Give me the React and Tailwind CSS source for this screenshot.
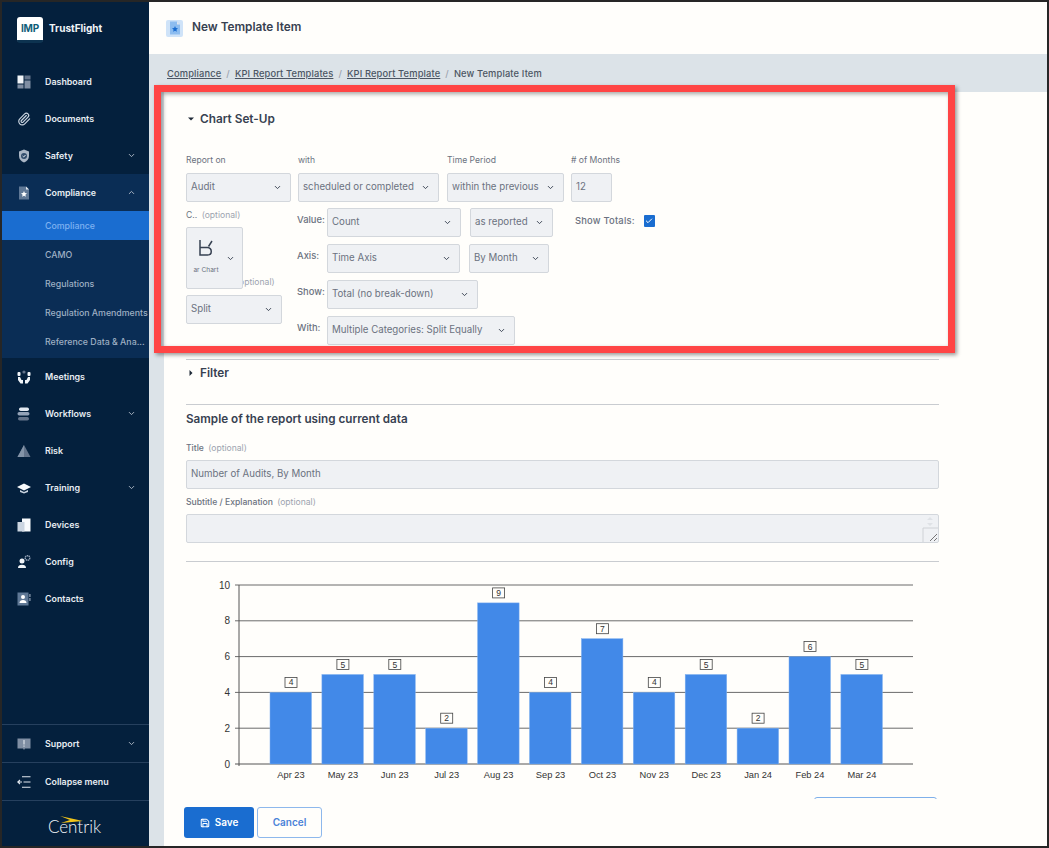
import React from "react";
import { ChevronDown, ChevronUp, Paperclip, Save, Check } from "lucide-react";

const chartData = [
  { label: "Apr 23", value: 4 },
  { label: "May 23", value: 5 },
  { label: "Jun 23", value: 5 },
  { label: "Jul 23", value: 2 },
  { label: "Aug 23", value: 9 },
  { label: "Sep 23", value: 4 },
  { label: "Oct 23", value: 7 },
  { label: "Nov 23", value: 4 },
  { label: "Dec 23", value: 5 },
  { label: "Jan 24", value: 2 },
  { label: "Feb 24", value: 6 },
  { label: "Mar 24", value: 5 },
];

const DashboardIcon = () => (
  <svg width="14" height="14" viewBox="0 0 14 14">
    <rect x="0.5" y="0.5" width="6" height="8" fill="#f1f5f9" />
    <rect x="7.5" y="0.5" width="6" height="4" fill="#64748b" />
    <rect x="7.5" y="5.5" width="6" height="8" fill="#7f8ea3" />
    <rect x="0.5" y="9.5" width="6" height="4" fill="#7f8ea3" />
  </svg>
);

const ShieldIcon = () => (
  <svg width="14" height="14" viewBox="0 0 14 14">
    <path d="M7 0.5 12 2.5V7c0 3-2.2 5.4-5 6.5C4.2 12.4 2 10 2 7V2.5Z" fill="#aab6c5" />
    <circle cx="7" cy="7" r="3" fill="#334e6d" />
    <path d="M5.6 7 6.7 8 8.5 6" stroke="#e2e8f0" strokeWidth="1" fill="none" />
  </svg>
);

const DocStarIcon = ({ bg = "#5f7896", star = "#ffffff" }) => (
  <svg width="14" height="14" viewBox="0 0 14 14">
    <path d="M2 0.5H9L12 3.5V13.5H2Z" fill={bg} />
    <path d="M9 0.5 12 3.5H9Z" fill="#e2e8f0" />
    <path d="M7 5 7.9 7.1 10 7.3 8.4 8.7 8.9 10.8 7 9.7 5.1 10.8 5.6 8.7 4 7.3 6.1 7.1Z" fill={star} />
  </svg>
);

const MeetingsIcon = () => (
  <svg width="14" height="14" viewBox="0 0 14 14">
    <circle cx="7" cy="2" r="1.6" fill="#64748b" />
    <rect x="0.5" y="2" width="3" height="4" rx="1" fill="#f1f5f9" />
    <rect x="10.5" y="2" width="3" height="4" rx="1" fill="#f1f5f9" />
    <path d="M1 7h2l1.5 3H6v3.5H3.5L1 10Z" fill="#f1f5f9" />
    <path d="M13 7h-2L9.5 10H8v3.5h2.5L13 10Z" fill="#f1f5f9" />
  </svg>
);

const WorkflowsIcon = () => (
  <svg width="14" height="14" viewBox="0 0 14 14">
    <rect x="2" y="0.5" width="10" height="3.5" rx="1.7" fill="#e2e8f0" />
    <rect x="0.5" y="5" width="12" height="3.5" rx="1.7" fill="#94a3b8" />
    <rect x="1" y="10" width="11" height="3.5" rx="1.7" fill="#64748b" />
  </svg>
);

const RiskIcon = () => (
  <svg width="14" height="14" viewBox="0 0 14 14">
    <path d="M7 1 13.5 13H0.5Z" fill="#64748b" />
    <path d="M7 1V13H0.5Z" fill="#8494a8" />
  </svg>
);

const TrainingIcon = () => (
  <svg width="14" height="14" viewBox="0 0 14 14">
    <path d="M7 2.5 14 6 7 9.5 0 6Z" fill="#f8fafc" />
    <path d="M3 9 7 11 11 9V11L7 12.5 3 11Z" fill="#cbd5e1" />
  </svg>
);

const DevicesIcon = () => (
  <svg width="14" height="14" viewBox="0 0 14 14">
    <rect x="5" y="0.5" width="8.5" height="13" fill="#f8fafc" />
    <rect x="0.5" y="4" width="7" height="9.5" fill="#cbd5e1" />
  </svg>
);

const ConfigIcon = () => (
  <svg width="14" height="14" viewBox="0 0 14 14">
    <circle cx="5" cy="6" r="2.5" fill="#f1f5f9" />
    <path d="M1 13c0-2.2 1.5-3.3 4-3.3S9 10.8 9 13Z" fill="#f1f5f9" />
    <circle cx="10.5" cy="3" r="2.3" fill="none" stroke="#94a3b8" strokeWidth="1.4" strokeDasharray="1.3 0.5" />
  </svg>
);

const ContactsIcon = () => (
  <svg width="14" height="14" viewBox="0 0 14 14">
    <rect x="0.5" y="0.5" width="11" height="13" fill="#5f7896" />
    <rect x="12.3" y="2" width="1.2" height="3" fill="#94a3b8" />
    <rect x="12.3" y="6" width="1.2" height="3" fill="#94a3b8" />
    <circle cx="6" cy="5" r="2" fill="#ffffff" />
    <path d="M2.5 11c0-2 1.5-3 3.5-3s3.5 1 3.5 3Z" fill="#ffffff" />
  </svg>
);

const SupportIcon = () => (
  <svg width="14" height="14" viewBox="0 0 14 14">
    <path d="M0.5 1.5H13.5V11.500H8L7 13 6 11.500H0.5Z" fill="#7f8ea3" />
    <rect x="6.4" y="3" width="1.2" height="4.5" fill="#dbe2ea" />
    <rect x="6.4" y="8.5" width="1.2" height="1.2" fill="#dbe2ea" />
  </svg>
);

const CollapseIcon = () => (
  <svg width="14" height="14" viewBox="0 0 14 14" fill="none" stroke="#e2e8f0" strokeWidth="1.1">
    <path d="M5 1.8H13.5M6.5 7H13.5M5 12.2H13.5" />
    <path d="M0.8 7H5M3 5 0.8 7 3 9" />
  </svg>
);

const NavItem = ({ icon, label, chevron, open }) => (
  <div className="flex items-center h-[37px] pl-[15px] pr-[13px]">
    <span className="w-[28px] flex items-center">{icon}</span>
    <span className="text-[8.9px] font-semibold text-[#e8edf3] flex-1 whitespace-nowrap pt-[1px]">{label}</span>
    {chevron && (open
      ? <ChevronUp size={9} strokeWidth={2.5} className="text-[#aeb9c6]" />
      : <ChevronDown size={9} strokeWidth={2.5} className="text-[#aeb9c6]" />)}
  </div>
);

const SubItem = ({ label, active }) => (
  <div className={`h-[29px] pl-[43px] pt-[1px] flex items-center text-[8.8px] font-medium whitespace-nowrap ${active ? "bg-[#1a6dd0] text-[#7fb2f0]" : "text-[#9fb0c4]"}`}>
    {label}
  </div>
);

const Sidebar = () => (
  <aside className="w-[147px] shrink-0 h-full bg-[#04203d] flex flex-col">
    <div className="h-[52px] pl-[15px] pt-[15px] flex items-start gap-[6px]">
      <div className="w-[26px] h-[26px] rounded-[3px] bg-white border-b-[3px] border-[#0d3350] flex items-center justify-center text-[10px] font-bold text-[#0f5d78] tracking-tight">
        IMP
      </div>
      <span className="text-[10px] font-bold text-[#f1f5f9] mt-[4px]">TrustFlight</span>
    </div>
    <div className="h-[9px]" />
    <NavItem icon={<DashboardIcon />} label="Dashboard" />
    <NavItem icon={<Paperclip size={14} className="text-[#cbd5e1]" />} label="Documents" />
    <NavItem icon={<ShieldIcon />} label="Safety" chevron />
    <div className="bg-[#0a2d55] pb-[2px]">
      <NavItem icon={<DocStarIcon />} label="Compliance" chevron open />
      <SubItem label="Compliance" active />
      <SubItem label="CAMO" />
      <SubItem label="Regulations" />
      <SubItem label="Regulation Amendments" />
      <SubItem label="Reference Data & Ana..." />
    </div>
    <NavItem icon={<MeetingsIcon />} label="Meetings" />
    <NavItem icon={<WorkflowsIcon />} label="Workflows" chevron />
    <NavItem icon={<RiskIcon />} label="Risk" />
    <NavItem icon={<TrainingIcon />} label="Training" chevron />
    <NavItem icon={<DevicesIcon />} label="Devices" />
    <NavItem icon={<ConfigIcon />} label="Config" />
    <NavItem icon={<ContactsIcon />} label="Contacts" />
    <div className="flex-1" />
    <div className="border-t border-[#26405e]">
      <NavItem icon={<SupportIcon />} label="Support" chevron />
    </div>
    <div className="border-t border-[#26405e]">
      <NavItem icon={<CollapseIcon />} label="Collapse menu" />
    </div>
    <div className="border-t border-[#26405e] h-[46px] relative flex items-center justify-center">
      <svg width="30" height="8" viewBox="0 0 30 8" className="absolute left-[55px] top-[15px]">
        <path d="M3 0 26 5 4 7 13 4Z" fill="#f0c419" />
      </svg>
      <span className="font-['Lato',sans-serif] font-light text-[17px] text-[#f1f5f9] mt-[6px] -ml-[2px]">Centrik</span>
    </div>
  </aside>
);

const Sel = ({ text, className = "" }) => (
  <div className={`h-[29px] bg-[#eff1f4] border border-[#d3d7dc] rounded-[2px] flex items-center justify-between pl-[4px] pr-[8px] text-[9.7px] text-[#6b7280] whitespace-nowrap ${className}`}>
    <span>{text}</span>
    <ChevronDown size={9} strokeWidth={2.5} className="text-[#374151] shrink-0" />
  </div>
);

const FieldLabel = ({ children, className = "" }) => (
  <div className={`text-[8.6px] text-[#6b7280] leading-[12px] whitespace-nowrap ${className}`}>{children}</div>
);

const RowLabel = ({ children }) => (
  <span className="w-[30px] shrink-0 text-[9.4px] font-medium text-[#6b7280] -mt-[5px]">{children}</span>
);

const Caret = ({ open }) => (
  <svg width="6" height="6" viewBox="0 0 6 6" className="shrink-0">
    {open ? <path d="M0 1.5H6L3 4.5Z" fill="#1f2937" /> : <path d="M1.5 0V6L4.5 3Z" fill="#1f2937" />}
  </svg>
);

const ChartSetup = () => (
  <div className="pt-[19px] h-[267px]">
    <div className="flex items-center gap-[6px] pl-[2px] text-[11.8px] font-semibold text-[#374151] leading-[16px]">
      <Caret open /> Chart Set-Up
    </div>
    <div className="flex mt-[27px]">
      <div className="w-[112px]">
        <FieldLabel className="mb-[7px]">Report on</FieldLabel>
        <Sel text="Audit" className="w-[105px]" />
      </div>
      <div className="w-[149px]">
        <FieldLabel className="mb-[7px]">with</FieldLabel>
        <Sel text="scheduled or completed" className="w-[141px]" />
      </div>
      <div className="w-[124px]">
        <FieldLabel className="mb-[7px]">Time Period</FieldLabel>
        <Sel text="within the previous" className="w-[117px]" />
      </div>
      <div>
        <FieldLabel className="mb-[7px]"># of Months</FieldLabel>
        <div className="w-[41px] h-[29px] bg-[#eff1f4] border border-[#d3d7dc] rounded-[2px] flex items-center pl-[4px] text-[9.7px] text-[#6b7280]">12</div>
      </div>
    </div>
    <div className="flex mt-[7px]">
      <div className="w-[111px]">
        <FieldLabel className="mb-[6px]">
          C.. <span className="text-[#9ca3af] ml-[2px]">(optional)</span>
        </FieldLabel>
        <div className="relative z-10 w-[57px] h-[62px] bg-[#eff1f4] border border-[#d3d7dc] rounded-[2px] flex items-center">
          <div className="w-[38px] flex flex-col items-center">
            <svg width="16" height="17" viewBox="0 0 16 17" fill="none" stroke="#374151" strokeWidth="1.5">
              <path d="M2 0V15H9.5C14.5 15 14.500 8 9.500 7.500H2M10.500 6.500 14 1" />
            </svg>
            <span className="text-[6.6px] text-[#6b7280] mt-[9px] whitespace-nowrap">ar Chart</span>
          </div>
          <ChevronDown size={9} strokeWidth={2.5} className="text-[#374151] ml-[1px]" />
        </div>
        <FieldLabel className="-mt-[13px] pl-[50px] text-[#9ca3af]">(optional)</FieldLabel>
        <Sel text="Split" className="w-[96px] mt-[7px]" />
      </div>
      <div className="w-[278px] -mt-[1px] flex flex-col gap-[7px]">
        <div className="flex items-center">
          <RowLabel>Value:</RowLabel>
          <Sel text="Count" className="w-[134px]" />
          <Sel text="as reported" className="w-[83px] ml-[9px]" />
        </div>
        <div className="flex items-center">
          <RowLabel>Axis:</RowLabel>
          <Sel text="Time Axis" className="w-[133px]" />
          <Sel text="By Month" className="w-[80px] ml-[9px]" />
        </div>
        <div className="flex items-center">
          <RowLabel>Show:</RowLabel>
          <Sel text="Total (no break-down)" className="w-[151px]" />
        </div>
        <div className="flex items-center">
          <RowLabel>With:</RowLabel>
          <Sel text="Multiple Categories: Split Equally" className="w-[188px]" />
        </div>
      </div>
      <div className="flex items-start gap-[9px] pt-[5px]">
        <span className="text-[9.4px] font-medium text-[#6b7280] tracking-[0.2px] whitespace-nowrap">Show Totals:</span>
        <span className="w-[11px] h-[12px] mt-[1px] rounded-[1px] bg-[#1a6dd0] flex items-center justify-center">
          <Check size={8} strokeWidth={3} className="text-white" />
        </span>
      </div>
    </div>
  </div>
);

const BarChart = () => {
  const yOf = (v) => 764 - v * 17.9;
  return (
    <svg width="753" height="222" viewBox="186 575 753 222" className="block">
      {[2, 4, 6, 8, 10].map((v) => (
        <line key={v} x1="235" x2="913" y1={yOf(v)} y2={yOf(v)} stroke="#6b6b6b" strokeWidth="1" />
      ))}
      <line x1="235" x2="913" y1="764" y2="764" stroke="#555" strokeWidth="1" />
      <line x1="239" x2="239" y1="585" y2="766" stroke="#555" strokeWidth="1" />
      {[0, 2, 4, 6, 8, 10].map((v) => (
        <text key={v} x="230" y={yOf(v) + 3.5} textAnchor="end" fontSize="10" fill="#333" fontFamily="Liberation Sans, sans-serif">{v}</text>
      ))}
      {chartData.map((d, i) => {
        const x = 270 + i * 51.9;
        const y = yOf(d.value);
        return (
          <g key={d.label}>
            <rect x={x} y={y} width="41.5" height={764 - y} fill="#4289e8" stroke="#7fb0f0" strokeWidth="0.5" />
            <rect x={x + 15} y={y - 15} width="12" height="10" fill="#fffefb" stroke="#444" strokeWidth="0.8" />
            <text x={x + 21} y={y - 7} textAnchor="middle" fontSize="8.5" fill="#333" fontFamily="Liberation Sans, sans-serif">{d.value}</text>
            <text x={x + 21} y="778" textAnchor="middle" fontSize="9.3" fill="#333" fontFamily="Liberation Sans, sans-serif">{d.label}</text>
          </g>
        );
      })}
    </svg>
  );
};

export default function App() {
  return (
    <div className="relative w-[1049px] h-[848px] overflow-hidden border-2 border-[#262626] bg-[#fffefb] flex font-['Inter',sans-serif]">
      <Sidebar />
      <main className="flex-1 min-w-0 flex flex-col bg-[#dce3e8]">
        {/* Header */}
        <div className="h-[52px] shrink-0 bg-[#fffefb] flex items-center pl-[17px] gap-[9px]">
          <span className="w-[17px] h-[17px] rounded-[2px] bg-[#cfe3f8] flex items-center justify-center">
            <DocStarIcon bg="#8dbdf0" star="#1a6dd0" />
          </span>
          <span className="text-[11.8px] font-semibold text-[#374151]">New Template Item</span>
        </div>

        {/* Breadcrumb */}
        <div className="h-[38px] shrink-0 pl-[18px] pt-[13px] flex gap-[5px] text-[9.3px] font-medium text-[#4b5563] tracking-[0.15px]">
          <span className="underline">Compliance</span>
          <span className="text-[#9ca3af]">/</span>
          <span className="underline">KPI Report Templates</span>
          <span className="text-[#9ca3af]">/</span>
          <span className="underline">KPI Report Template</span>
          <span className="text-[#9ca3af]">/</span>
          <span>New Template Item</span>
        </div>

        {/* Content */}
        <div className="flex-1 ml-[15px] bg-[#fffefb] flex flex-col min-h-0">
          <div className="h-[707px] shrink-0 overflow-hidden pl-[22px] w-[775px]">
            <ChartSetup />
            <div className="border-t border-[#c9ccd0] h-[45px] pt-[5px] flex items-start gap-[6px] pl-[2px] text-[11.8px] font-semibold text-[#374151] leading-[16px]">
              <span className="pt-[5px]"><Caret /></span> Filter
            </div>
            <div className="border-t border-[#c9ccd0] pt-[6px]">
              <div className="text-[11.7px] font-semibold text-[#374151] leading-[16px]">Sample of the report using current data</div>
              <FieldLabel className="mt-[15px] font-medium">
                Title <span className="text-[#9ca3af] font-normal ml-[2px]">(optional)</span>
              </FieldLabel>
              <div className="h-[29px] mt-[6px] bg-[#eff1f4] border border-[#d3d7dc] rounded-[2px] flex items-center pl-[4px] text-[9.7px] text-[#6b7280]">
                Number of Audits, By Month
              </div>
              <FieldLabel className="mt-[7px] font-medium">
                Subtitle / Explanation <span className="text-[#9ca3af] font-normal ml-[2px]">(optional)</span>
              </FieldLabel>
              <div className="relative h-[29px] mt-[6px] bg-[#eff1f4] border border-[#d3d7dc] rounded-[2px]">
                <svg width="16" height="27" viewBox="0 0 16 27" className="absolute right-0 top-0">
                  <path d="M8 2 11 5H5ZM8 11 5 8H11Z" fill="#dfe2e6" />
                  <path d="M1 27V13H16" fill="none" stroke="#cfd2d6" />
                  <path d="M8 26 15 19M12 26 15 23" stroke="#555" strokeWidth="0.8" />
                </svg>
              </div>
              <div className="border-t border-[#c9ccd0] mt-[18px]" />
            </div>
            <div className="mt-[13px]">
              <BarChart />
            </div>
            <div className="ml-[628px] w-[123px] h-[30px] border border-[#7fb0ea] rounded-[3px]" />
          </div>

          {/* Footer buttons */}
          <div className="pl-[20px] pt-[8px] flex gap-[3px]">
            <button className="w-[70px] h-[31px] rounded-[3px] bg-[#1a6dd0] text-white text-[10px] font-semibold flex items-center justify-center gap-[5px]">
              <Save size={10} strokeWidth={2.5} /> Save
            </button>
            <button className="w-[65px] h-[31px] rounded-[3px] bg-[#fffefb] border border-[#8db8ec] text-[#4a82d8] text-[10px] font-semibold">
              Cancel
            </button>
          </div>
        </div>
      </main>

      {/* Red annotation box over the form */}
      <div className="absolute left-[152px] top-[83px] w-[801px] h-[268px] border-[7.5px] border-[#ff4545] pointer-events-none shadow-[2px_2px_4px_rgba(0,0,0,0.4),inset_2px_2px_4px_rgba(0,0,0,0.35)]" />
    </div>
  );
}
